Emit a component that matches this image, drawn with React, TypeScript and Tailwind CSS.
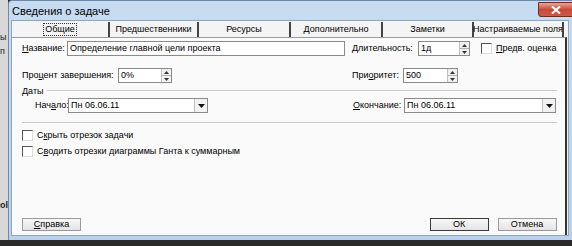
import React from 'react'

const font = { fontFamily: '"Liberation Sans", Arial, sans-serif' }

function Spin({ value, w }: { value: string; w: string }) {
  return (
    <div className={`flex h-[15px] shrink-0 ${w} border border-[#8a8a8a] bg-white`}>
      <div className="flex-1 pl-[2px] text-[9px] leading-[13px] text-black">{value}</div>
      <div className="flex w-[10px] flex-col border-l border-[#c0c0c0] bg-[#f0f0f0]">
        <div className="flex flex-1 items-center justify-center border-b border-[#b0b0b0]">
          <svg width="5" height="3" viewBox="0 0 5 3"><path d="M0 3 L2.5 0 L5 3Z" fill="#333" /></svg>
        </div>
        <div className="flex flex-1 items-center justify-center">
          <svg width="5" height="3" viewBox="0 0 5 3"><path d="M0 0 L2.5 3 L5 0Z" fill="#333" /></svg>
        </div>
      </div>
    </div>
  )
}

function Combo({ value, w }: { value: string; w: string }) {
  return (
    <div className={`flex h-[15px] shrink-0 ${w} border border-[#8a8a8a] bg-white`}>
      <div className="flex-1 pl-[2px] text-[9px] leading-[13px] text-black">{value}</div>
      <div className="flex w-[13px] items-center justify-center border-l border-[#c0c0c0] bg-[#f2f2f2]">
        <svg width="7" height="4" viewBox="0 0 7 4"><path d="M0 0 L3.5 4 L7 0Z" fill="#111" /></svg>
      </div>
    </div>
  )
}

function Check({ children }: { children: React.ReactNode }) {
  return (
    <div className="flex items-center gap-[4px] whitespace-nowrap">
      <div className="h-[11px] w-[11px] shrink-0 border border-[#555] border-r-[#ddd] border-b-[#ddd] bg-white" />
      <span className="text-[9px] text-black">{children}</span>
    </div>
  )
}

function Btn({ children, focus }: { children: React.ReactNode; focus?: boolean }) {
  return (
    <div
      className={`flex h-[13px] w-[59px] items-center justify-center border bg-gradient-to-b from-[#f8f8f8] to-[#e4e4e4] text-[9px] text-black ${
        focus ? 'border-[#3a3a3a]' : 'border-[#9a9a9a]'
      }`}
    >
      <span>{children}</span>
    </div>
  )
}

const tabs = ['Общие', 'Предшественники', 'Ресурсы', 'Дополнительно', 'Заметки', 'Настраиваемые поля']
const tabW = ['w-[96px]', 'w-[89px]', 'w-[92px]', 'w-[92px]', 'w-[91px]', 'w-[90px]']

export default function App() {
  return (
    <div className="flex h-[246px] w-[572px] flex-col overflow-hidden bg-[#1e1e1e]" style={font}>
      <div className="flex h-[240px]">
        {/* background app strip */}
        <div className="flex w-[8px] shrink-0 flex-col overflow-hidden bg-[#d8d8d8] pt-[30px] text-[9px] leading-[14px] text-[#222]">
          <span>ы</span>
          <span>п</span>
          <span className="mt-[140px] font-bold">ol</span>
        </div>
        {/* window */}
        <div className="flex flex-1 flex-col rounded-tl-[4px] border-l border-t border-[#6f8aa8] bg-gradient-to-b from-[#c7dbf1] to-[#b9d1ec] pl-[2px] pr-[6px] pb-[4px]">
          <div className="flex h-[19px] items-center justify-between">
            <span className="pl-[1px] pt-[1px] text-[11px] text-black">Сведения о задаче</span>
            <div className="-mr-[6px] mb-[2px] flex h-[15px] w-[37px] items-center justify-center rounded-b-[3px] border border-[#6e2c24] bg-gradient-to-b from-[#e8a493] via-[#c9493a] to-[#cc5b45]">
              <svg width="10" height="8" viewBox="0 0 10 8"><path d="M1 0.5 L9 7.5 M9 0.5 L1 7.5" stroke="white" strokeWidth="2" /></svg>
            </div>
          </div>
          <div className="flex flex-1 flex-col border border-[#8ea4bf] bg-[#f4f4f4] pt-[1px]">
            {/* tab strip */}
            <div className="flex h-[15px] items-end">
              {tabs.map((t, i) => (
                <div
                  key={t}
                  className={`flex h-[15px] shrink-0 ${tabW[i]} items-center justify-center whitespace-nowrap text-[9px] text-black ${
                    i > 0 ? 'border-l-2 border-[#444]' : ''
                  }`}
                >
                  {i === 0 ? (
                    <span className="border border-dotted border-[#333] px-[1px] leading-[11px]">{t}</span>
                  ) : (
                    t
                  )}
                </div>
              ))}
              <div className="h-[15px] border-l-2 border-[#444]" />
            </div>
            {/* panel */}
            <div className="mr-[1px] flex flex-1 flex-col whitespace-nowrap border-t border-r-2 border-[#9a9a9a] border-r-[#333] bg-[#fafafa] pl-[10px] pr-[8px] pt-[3px] pb-[4px] text-[9px] text-black">
              <div className="flex h-[15px] items-center">
                <span className="w-[45px] shrink-0"><u>Н</u>азвание:</span>
                <div className="h-[15px] w-[278px] shrink-0 border border-[#8a8a8a] bg-white pl-[2px] leading-[13px]">
                  Определение главной цели проекта
                </div>
                <span className="ml-[7px] w-[66px] shrink-0"><u>Д</u>лительность:</span>
                <Spin value="1д" w="w-[52px]" />
                <div className="ml-[11px]">
                  <Check><u>П</u>редв. оценка</Check>
                </div>
              </div>
              <div className="mt-[12px] flex h-[15px] items-center">
                <span className="w-[96px] shrink-0">Про<u>ц</u>ент завершения:</span>
                <Spin value="0%" w="w-[54px]" />
                <span className="ml-[180px] w-[51px] shrink-0">При<u>о</u>ритет:</span>
                <Spin value="500" w="w-[55px]" />
              </div>
              <div className="mt-[3px] flex h-[10px] items-center leading-[10px]">
                <span>Даты</span>
                <div className="ml-[3px] h-0 flex-1 border-t border-[#c8c8c8] border-b border-b-white" />
              </div>
              <div className="mt-[2px] flex h-[15px] items-center">
                <span className="ml-[13px] w-[33px] shrink-0">Нач<u>а</u>ло:</span>
                <Combo value="Пн 06.06.11" w="w-[140px]" />
                <span className="ml-[145px] w-[51px] shrink-0"><u>О</u>кончание:</span>
                <Combo value="Пн 06.06.11" w="w-[152px]" />
              </div>
              <div className="mt-[9px] h-0 border-t border-[#c8c8c8] border-b border-b-white" />
              <div className="mt-[5px] flex flex-col gap-[2px]">
                <Check>С<u>к</u>рыть отрезок задачи</Check>
                <Check>С<u>в</u>одить отрезки диаграммы Ганта к суммарным</Check>
              </div>
              <div className="mt-auto flex items-center">
                <Btn><u>С</u>правка</Btn>
                <div className="ml-auto flex gap-[9px]">
                  <Btn focus>ОК</Btn>
                  <Btn>Отмена</Btn>
                </div>
              </div>
            </div>
          </div>
        </div>
      </div>
      <div className="flex-1 bg-[#2a2a2a]" />
    </div>
  )
}
